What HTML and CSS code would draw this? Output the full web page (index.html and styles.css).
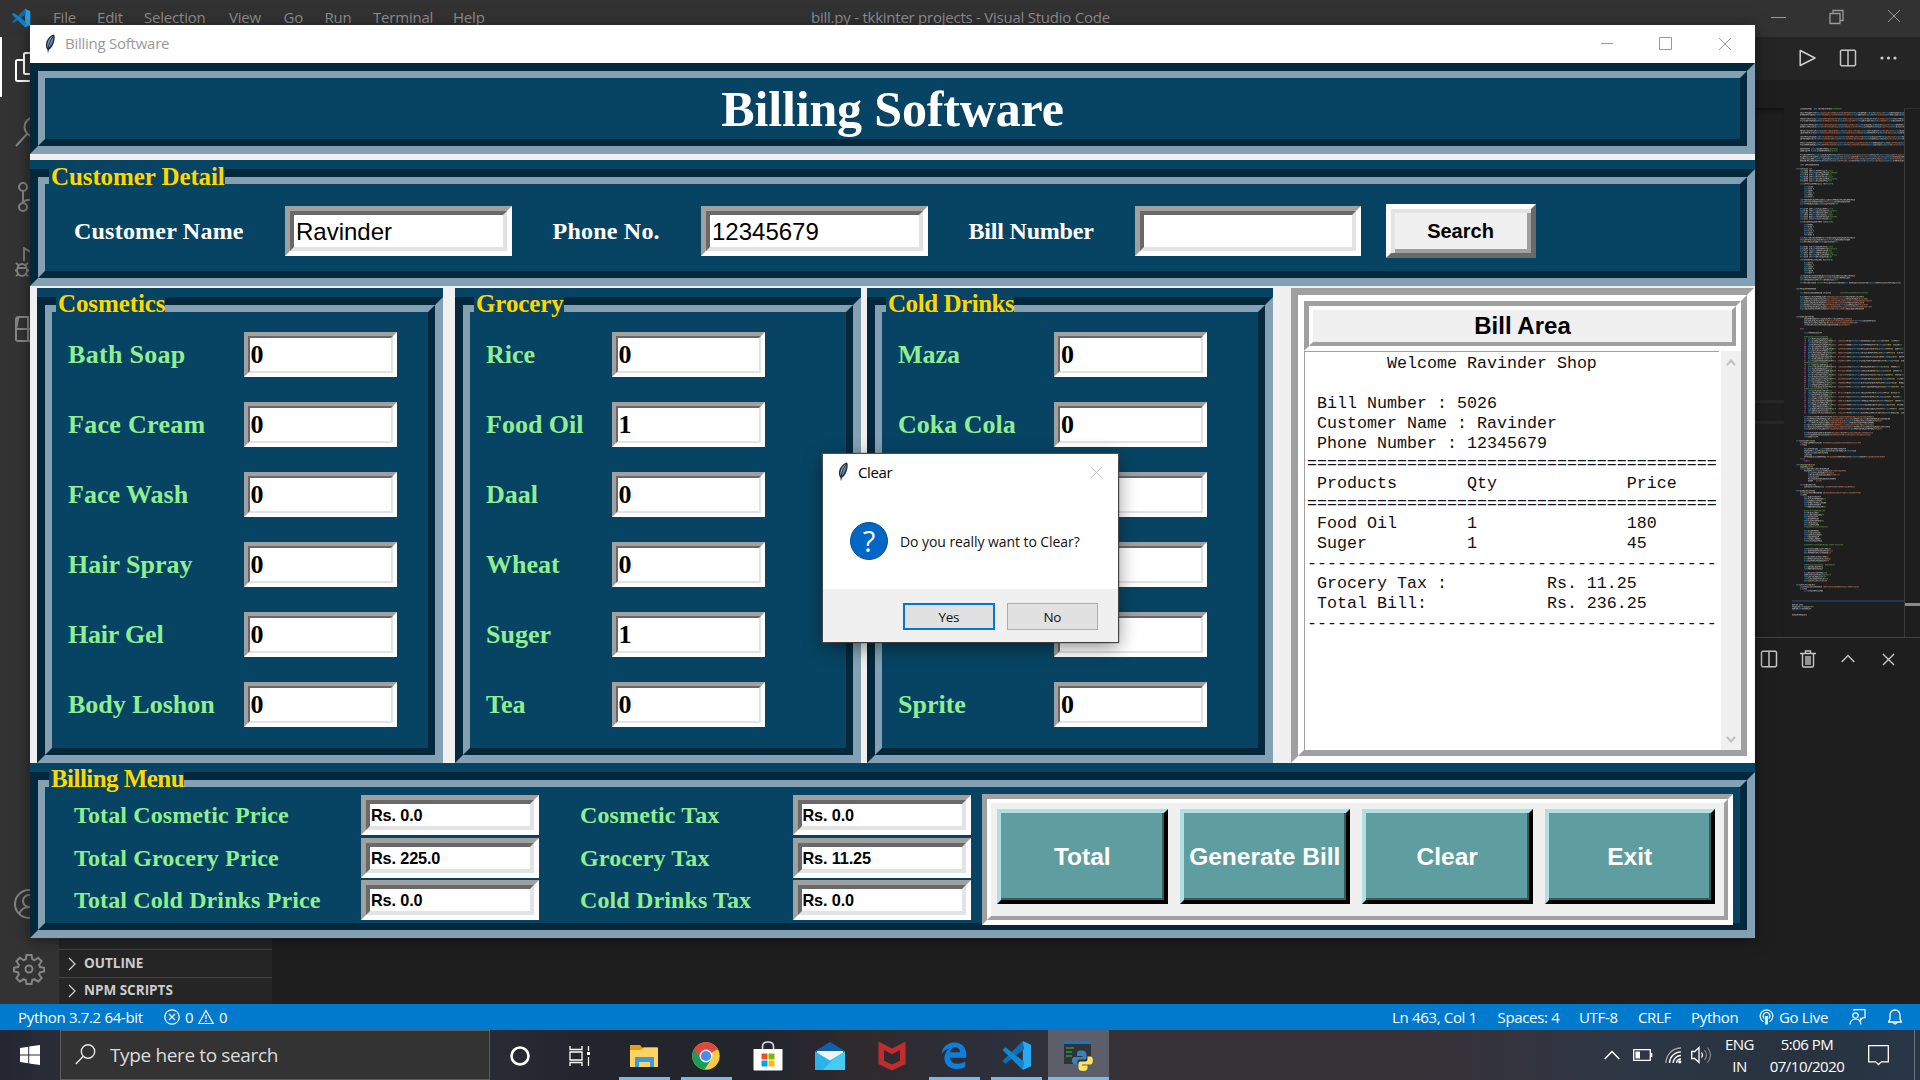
FILE: index.html
```html
<!DOCTYPE html>
<html lang="en">
<head>
<meta charset="utf-8">
<title>Billing Software</title>
<link rel="stylesheet" href="styles.css">
</head>
<body>
<svg class="defs" aria-hidden="true">
  <defs>
    <linearGradient id="penBlue" x1="0" y1="0" x2="1" y2="1"><stop offset="0" stop-color="#9cc4ee"/><stop offset="1" stop-color="#24559c"/></linearGradient>
    <symbol id="feather" viewBox="0 0 12 20">
      <path d="M9.8 .6C6 1.600 2.600 5.500 2 10c-.3 2.500.2 4.300 1.400 5.600L4 19.400l.9-3.600C8 14 10 9.500 10.600 5c.3-2 .1-3.600-.8-4.400z" fill="#1d2a3c"/>
      <path d="M9 2C6 3.300 3.800 6.800 3.300 10.200c-.2 1.600 0 2.700.5 3.600C4.600 9.500 6.300 5.500 9 2z" fill="#8f9aa8"/>
      <path d="M9.500 2.600C7 6 5.300 10 4.700 14 7.200 12 9.600 7.500 9.500 2.600z" fill="url(#penBlue)"/>
    </symbol>
    <symbol id="vscode" viewBox="0 0 32 32">
      <path d="M22.500 1 31 5v22l-8.500 4z" fill="#29a9f2"/>
      <path d="M22.500 1 24 9.500 4.500 24.500 1.500 21.800z" fill="#0c6fb8"/>
      <path d="M22.500 31 24 22.500 4.500 7.500 1.500 10.200z" fill="#1089d4"/>
    </symbol>
    <symbol id="split" viewBox="0 0 18 18"><path d="M2.500 1.200h13l1 1v13.600l-1 1h-13l-1-1V2.200zM9 1.200v15.600" fill="none" stroke="#c5c5c5" stroke-width="1.500"/></symbol>
    <symbol id="cross" viewBox="0 0 14 14"><path d="M1 1l12 12M13 1L1 13" fill="none" stroke="currentColor"/></symbol>
  </defs>
</svg>

<div class="desktop">
  <div class="vscode">
    <header class="vs-title">
      <svg class="vs-logo" width="20" height="20"><use href="#vscode"/></svg>
      <nav class="vs-menu"><span>File</span><span>Edit</span><span>Selection</span><span>View</span><span>Go</span><span>Run</span><span>Terminal</span><span>Help</span></nav>
      <div class="vs-name"><span>bill.py - tkkinter projects - Visual Studio Code</span></div>
      <div class="vs-controls">
        <svg width="16" height="16"><path d="M0 8.500h15" stroke="#9a9a9a"/></svg>
        <svg width="16" height="16"><path d="M1 4.500h10v10H1zM4 4.500v-3h10v10h-3" fill="none" stroke="#9a9a9a" stroke-width="1.300"/></svg>
        <svg class="x" width="14" height="14"><use href="#cross"/></svg>
      </div>
    </header>
    <div class="vs-body">
      <aside class="activity">
        <div class="act active"><svg width="30" height="30" viewBox="0 0 30 30"><path d="M9 8H2.500Q1 8 1 9.500v18Q1 29 2.500 29H17M9 2.500Q9 1 10.500 1H22l6 6v13q0 2-2 2H10.500Q9 22 9 20.500z" fill="none" stroke="#fff" stroke-width="2"/></svg></div>
        <div class="act"><svg width="30" height="30" viewBox="0 0 30 30"><path d="M1 29l11-12" fill="none" stroke="#858585" stroke-width="2"/><circle cx="19" cy="10" r="9.500" fill="none" stroke="#858585" stroke-width="2"/></svg></div>
        <div class="act"><svg width="30" height="30" viewBox="0 0 30 30"><g fill="none" stroke="#858585" stroke-width="2"><circle cx="8" cy="5" r="4"/><circle cx="8" cy="25" r="4"/><circle cx="24" cy="9" r="4"/><path d="M8 9v12M24 13q0 5-6 5h-5q-4 0-5 3"/></g></svg></div>
        <div class="act"><svg width="30" height="30" viewBox="0 0 30 30"><g fill="none" stroke="#858585" stroke-width="1.800"><path d="M9 14V1l19 12-12 8"/><ellipse cx="7" cy="23" rx="5" ry="6"/><path d="M2 21h10M0 23.500h2M12 23.500h2M1 16l3 2.500M13 16l-3 2.500M1 29l3-2M13 29l-3-2"/></g></svg></div>
        <div class="act"><svg width="30" height="30" viewBox="0 0 30 30"><path d="M3.500 5H13v24M1 17h25v10.500q0 1.500-1.500 1.500h-21Q1 29 1 27.500v-20Q1 5 3.500 5zM17 1h11v11H17z" fill="none" stroke="#858585" stroke-width="2"/></svg></div>
        <div class="act account"><svg width="30" height="30" viewBox="0 0 30 30"><g fill="none" stroke="#858585" stroke-width="2"><circle cx="15" cy="15" r="14"/><circle cx="15" cy="12" r="6"/><path d="M5 25q3-7 10-7t10 7"/></g></svg></div>
        <div class="act gear"><svg width="32" height="32" viewBox="0 0 32 32"><g fill="none" stroke="#858585" stroke-width="2"><path d="M13.500 2h5l.8 4.300 2.200.9 3.600-2.500 3.500 3.500-2.500 3.600.9 2.200 4.200.8v3.600l-4.200.9-.9 2.200 2.500 3.600-3.500 3.500-3.600-2.500-2.200.9-.8 4h-5l-.8-4-2.200-.9-3.600 2.500-3.500-3.500 2.500-3.600-.9-2.200-4-.9v-3.600l4-.8.9-2.200-2.500-3.600 3.500-3.500 3.600 2.500 2.200-.9z"/><circle cx="16" cy="16" r="3.500"/></g></svg></div>
      </aside>
      <aside class="sidebar">
        <div class="section"><svg width="8" height="14"><path d="M1 1l6 6-6 6" fill="none" stroke="#ccc" stroke-width="1.300"/></svg><span>OUTLINE</span></div>
        <div class="section npm"><svg width="8" height="14"><path d="M1 1l6 6-6 6" fill="none" stroke="#ccc" stroke-width="1.300"/></svg><span>NPM SCRIPTS</span></div>
      </aside>
      <main class="editor">
        <div class="tabs">
          <svg width="17" height="18" viewBox="0 0 17 18"><path d="M1.200 1.500v15L16 9z" fill="none" stroke="#d0d0d0" stroke-width="1.500" stroke-linejoin="round"/></svg>
          <svg width="18" height="18"><use href="#split"/></svg>
          <svg width="17" height="4"><circle cx="2" cy="2" r="1.600" fill="#ccc"/><circle cx="8.500" cy="2" r="1.600" fill="#ccc"/><circle cx="15" cy="2" r="1.600" fill="#ccc"/></svg>
        </div>
        <div class="crumbs"></div>
        <div class="code">
          <div class="lines"><i></i><i></i></div>
          <canvas id="minimap" width="112" height="529"></canvas>
          <div class="ruler"><i></i></div>
        </div>
        <div class="panel">
          <svg width="18" height="18"><use href="#split"/></svg>
          <svg width="16" height="18" viewBox="0 0 16 18"><path d="M0 3.500h16M5.500 3V1h5v2M2.500 4v11.500q0 1.500 1.500 1.500h8q1.500 0 1.500-1.500V4M6 6v9M8 6v9M10 6v9" fill="none" stroke="#c5c5c5" stroke-width="1.400"/></svg>
          <svg width="14" height="9"><path d="M.7 8L7 1.500 13.300 8" fill="none" stroke="#c5c5c5" stroke-width="1.500"/></svg>
          <svg class="px" width="13" height="13" viewBox="0 0 14 14"><use href="#cross"/></svg>
        </div>
      </main>
    </div>
    <footer class="status">
      <span class="st-py">Python 3.7.2 64-bit</span>
      <svg width="16" height="16"><g fill="none" stroke="#fff" stroke-width="1.200"><circle cx="8" cy="8" r="7.200"/><path d="M5 5l6 6M11 5l-6 6"/></g></svg><span class="st-n">0</span>
      <svg width="16" height="16"><path d="M8 1.500L15.200 14.500H.8zM8 6v4M8 11.200v1.600" fill="none" stroke="#fff" stroke-width="1.200"/></svg><span class="st-n">0</span>
      <div class="st-right">
        <span class="w1">Ln 463, Col 1</span><span class="w2">Spaces: 4</span><span class="w3">UTF-8</span><span class="w4">CRLF</span><span class="w5">Python</span>
        <span class="w6"><svg width="15" height="16" viewBox="0 0 15 16"><g fill="none" stroke="#fff" stroke-width="1.200"><path d="M4.500 12.700A6.300 6.300 0 1 1 10.500 12.700M5.300 9.500A3.400 3.400 0 1 1 9.700 9.500"/></g><path d="M6.200 7h2.600v8.500H6.200z" fill="#fff"/></svg>Go Live</span>
        <svg class="w7" width="17" height="16" viewBox="0 0 17 16"><g fill="none" stroke="#fff" stroke-width="1.200"><path d="M5 2V.7h11v8h-2l-2.500 2.500V8.700"/><circle cx="6.500" cy="6.500" r="2.700"/><path d="M1 15.500q.5-5.500 5.500-5.500t5.500 5.500"/></g></svg>
        <svg width="14" height="16" viewBox="0 0 14 16"><path d="M.5 13h13l-1.500-3V6.500C12 3 10 1 7 1S2 3 2 6.500V10zM5 13.500q2 3 4 0" fill="none" stroke="#fff" stroke-width="1.300"/></svg>
      </div>
    </footer>
  </div>

  <footer class="taskbar">
    <div class="start"><svg width="20" height="20" viewBox="0 0 20 20"><path d="M0 3l8.200-1.200v7.700H0zM9.200 1.600L20 0v9.500H9.200zM0 10.500h8.200v7.700L0 17zM9.200 10.500H20V20L9.200 18.400z" fill="#fff"/></svg></div>
    <div class="search"><svg width="21" height="21" viewBox="0 0 21 21"><g fill="none" stroke="#e8e8e8" stroke-width="1.400"><circle cx="13" cy="7.500" r="6.700"/><path d="M8.300 12.300L.8 20"/></g></svg><span>Type here to search</span></div>
    <div class="tb cortana"><svg width="22" height="22"><circle cx="11" cy="11" r="8.500" fill="none" stroke="#fff" stroke-width="2.600"/></svg></div>
    <div class="tb taskview"><svg width="22" height="20" viewBox="0 0 22 20"><path d="M1 0v3.500h12V0M1 20v-3.500h12V20M1 6h12v8H1zM19.500 0v5M19.500 11v9" fill="none" stroke="#fff" stroke-width="1.300"/><path d="M18 6h3v3h-3z" fill="#fff"/></svg></div>
    <div class="tb open"><svg width="29" height="24" viewBox="0 0 29 24"><path d="M0 1h10l2 2.500h15V23H0z" fill="#e3a013"/><path d="M0 6h11l3-2.500h14V23H0z" fill="#ffd261"/><path d="M5 13h19v10h-4v-5H9v5H5z" fill="#3c9ae0"/></svg></div>
    <div class="tb open"><svg width="28" height="28" viewBox="0 0 28 28"><circle cx="14" cy="14" r="13.700" fill="#fccb3d"/><path d="M14 14L2.200 7A13.700 13.700 0 0 1 25.800 7z" fill="#dc4a3d"/><path d="M2.200 7a13.700 13.700 0 0 0 10.300 20.600L19.500 17 14 14z" fill="#169e59"/><path d="M14 7.500h11.900A13.700 13.700 0 0 0 2.200 7l5.500 9z" fill="#dc4a3d"/><circle cx="14" cy="14" r="6.500" fill="#f2f2f2"/><circle cx="14" cy="14" r="5.100" fill="#4a8af4"/></svg></div>
    <div class="tb"><svg width="30" height="30" viewBox="0 0 30 30"><path d="M9.500 8V5.500q0-4.500 5.500-4.500t5.500 4.500V8" fill="none" stroke="#ddd" stroke-width="1.600"/><path d="M.5 8h29v20.500q0 1-1 1h-27q-1 0-1-1z" fill="#fff"/><path d="M8.500 12.500h6v6h-6z" fill="#f25022"/><path d="M15.500 12.500h6v6h-6z" fill="#7fba00"/><path d="M8.500 19.500h6v6h-6z" fill="#00a4ef"/><path d="M15.500 19.500h6v6h-6z" fill="#ffb900"/></svg></div>
    <div class="tb"><svg width="30" height="28" viewBox="0 0 30 28"><path d="M0 9L15 0l15 9v5H0z" fill="#0f5fb0"/><path d="M2 9h26v10H2z" fill="#f4f4f4"/><path d="M0 9.500l15 9 15-9V28H0z" fill="#2bb3ea"/><path d="M30 9.500V28H8l12-12.500z" fill="#43cdf4"/></svg></div>
    <div class="tb"><svg width="28" height="30" viewBox="0 0 28 30"><path d="M.5.500L14 7.500 27.500.500V23L14 29.500.5 23zM6 9v10.800l8 3.800 8-3.800V9l-8 4.300z" fill="#c22c2c" fill-rule="evenodd"/></svg></div>
    <div class="tb open"><svg width="26" height="27" viewBox="0 0 26 27"><path d="M.5 12C1.500 4.500 7 .5 13.500.5 21 .5 25.300 6 25.300 12.500v3.300H9c.3 4 3.600 6 7.600 6 2.900 0 5.400-.8 7.700-2v5.100c-2.600 1.300-5.500 2-8.700 2C8.500 26.900 3.400 22.800 3.400 16.500c0-4.400 2.200-8 6-9.900C5.500 7 2.600 9 .5 12zm8.700-1.700h9.700c0-3.200-1.900-5-4.700-5s-4.600 2-5 5z" fill="#0f7edc"/></svg></div>
    <div class="tb open"><svg width="31" height="31"><use href="#vscode"/></svg></div>
    <div class="tb open current"><svg width="30" height="32" viewBox="0 0 30 32"><path d="M0 2h27v22H0z" fill="#2f3437"/><path d="M0 1h27v3H0z" fill="#0f78d0"/><path d="M2 8h8M2 12h6M2 16h6" stroke="#2f8f4a" stroke-width="1.300"/><path d="M17.500 10.500c-4 0-4.500 1.500-4.500 4V16h5.500v1h-8c-3.500 0-3.500 7 .5 7.500h2.500v-3q0-2 2-2h5q2 0 2-2v-3c0-2.500-1.500-4-5-4z" fill="#3d7fb8"/><path d="M19 31c4 0 4.500-1.500 4.500-4v-1.500H18v-1h8.500c3 0 3.500-7.500 0-8H23.500v3q0 2-2 2h-5q-2 0-2 2v4c0 2.500 1.500 3.500 4.500 3.500z" fill="#ffe160"/></svg></div>
    <div class="tray">
      <svg class="t1" width="16" height="10"><path d="M.7 9L8 1.500 15.300 9" fill="none" stroke="#fff" stroke-width="1.400"/></svg>
      <svg class="t2" width="20" height="12"><path d="M.7 .7h16.600v10.600H.7zM18.700 4v4" fill="none" stroke="#fff" stroke-width="1.300"/><path d="M2.500 2.500h4.500v7H2.500z" fill="#fff"/></svg>
      <svg class="t3" width="17" height="17" viewBox="0 0 17 17"><g fill="none" stroke-width="1.300"><path d="M1 16A15 15 0 0 1 16 1" stroke="#aaa"/><path d="M4.500 16A11.500 11.500 0 0 1 16 4.800M8 16a8 8 0 0 1 8-7.500M11.500 16q.5-4 4.500-4" stroke="#fff"/></g><circle cx="14.800" cy="14.800" r="1.600" fill="#fff"/></svg>
      <svg class="t4" width="21" height="18" viewBox="0 0 21 18"><path d="M.7 5.500h3L8 1.500v15l-4.300-4h-3z" fill="none" stroke="#fff" stroke-width="1.300"/><path d="M10.500 6.500q2 2.500 0 5" fill="none" stroke="#fff" stroke-width="1.200"/><path d="M13.500 4q4 5 0 10M16.500 1.500q6 7.500 0 15" fill="none" stroke="#888" stroke-width="1.200"/></svg>
      <div class="lang"><span>ENG</span><span>IN</span></div>
      <div class="clock"><span>5:06 PM</span><span class="date">07/10/2020</span></div>
      <svg class="t5" width="21" height="21" viewBox="0 0 21 21"><path d="M.7 .7h19.600v16.100h-7L10.500 19.500 7.700 16.800h-7z" fill="none" stroke="#fff" stroke-width="1.300"/></svg>
    </div>
  </footer>

  <div class="app">
    <header class="app-title">
      <svg width="12" height="20"><use href="#feather"/></svg><span>Billing Software</span>
      <svg class="c1" width="12" height="12"><path d="M0 5.500h12" stroke="#999"/></svg>
      <svg class="c2" width="13" height="13"><path d="M.5 .5h12v12H.5z" fill="none" stroke="#999"/></svg>
      <svg class="c3" width="14" height="14"><use href="#cross"/></svg>
    </header>
    <div class="groove banner"><div class="groove-in"><h1>Billing Software</h1></div></div>

    <section class="lframe customer">
      <div class="groove"><div class="groove-in">
        <label class="k1">Customer Name</label><div class="entry big">Ravinder</div>
        <label class="k2">Phone No.</label><div class="entry big">12345679</div>
        <label class="k3">Bill Number</label><div class="entry big"></div>
        <button class="find">Search</button>
      </div></div>
      <h2>Customer Detail</h2>
    </section>

    <div class="middle">
      <section class="lframe goods cosmetics">
        <div class="groove"><div class="groove-in">
          <label class="wide">Bath Soap</label><div class="entry">0</div>
          <label class="wide">Face Cream</label><div class="entry">0</div>
          <label>Face Wash</label><div class="entry">0</div>
          <label>Hair Spray</label><div class="entry">0</div>
          <label class="tight">Hair Gel</label><div class="entry">0</div>
          <label>Body Loshon</label><div class="entry">0</div>
        </div></div>
        <h2>Cosmetics</h2>
      </section>
      <section class="lframe goods grocery">
        <div class="groove"><div class="groove-in">
          <label>Rice</label><div class="entry">0</div>
          <label>Food Oil</label><div class="entry">1</div>
          <label>Daal</label><div class="entry">0</div>
          <label>Wheat</label><div class="entry">0</div>
          <label>Suger</label><div class="entry">1</div>
          <label>Tea</label><div class="entry">0</div>
        </div></div>
        <h2>Grocery</h2>
      </section>
      <section class="lframe goods drinks">
        <div class="groove"><div class="groove-in">
          <label>Maza</label><div class="entry">0</div>
          <label>Coka Cola</label><div class="entry">0</div>
          <label></label><div class="entry"></div>
          <label></label><div class="entry"></div>
          <label>Limca</label><div class="entry">0</div>
          <label>Sprite</label><div class="entry">0</div>
        </div></div>
        <h2>Cold Drinks</h2>
      </section>
      <section class="bill">
        <div class="bill-in">
          <div class="bill-head"><div>Bill Area</div></div>
          <div class="bill-body">
<pre>        Welcome Ravinder Shop

 Bill Number : 5026
 Customer Name : Ravinder
 Phone Number : 12345679
=========================================
 Products       Qty             Price
=========================================
 Food Oil       1               180
 Suger          1               45
-----------------------------------------
 Grocery Tax :          Rs. 11.25
 Total Bill:            Rs. 236.25
-----------------------------------------</pre>
            <div class="scroll">
              <svg width="10" height="7"><path d="M1 6l4-4.500L9 6" fill="none" stroke="#bfbfbf" stroke-width="2"/></svg>
              <svg width="10" height="7"><path d="M1 1l4 4.500L9 1" fill="none" stroke="#bfbfbf" stroke-width="2"/></svg>
            </div>
          </div>
        </div>
      </section>
    </div>

    <section class="lframe menu">
      <div class="groove"><div class="groove-in">
        <div class="totals">
          <label>Total Cosmetic Price</label><div class="entry sum">Rs. 0.0</div><label class="tax">Cosmetic Tax</label><div class="entry sum">Rs. 0.0</div>
          <label>Total Grocery Price</label><div class="entry sum">Rs. 225.0</div><label class="tax">Grocery Tax</label><div class="entry sum">Rs. 11.25</div>
          <label>Total Cold Drinks Price</label><div class="entry sum">Rs. 0.0</div><label class="tax">Cold Drinks Tax</label><div class="entry sum">Rs. 0.0</div>
        </div>
        <div class="actions"><div class="actions-in">
          <button>Total</button><button>Generate Bill</button><button>Clear</button><button>Exit</button>
        </div></div>
      </div></div>
      <h2>Billing Menu</h2>
    </section>
  </div>

  <div class="dialog">
    <header><svg width="12" height="20"><use href="#feather"/></svg><span>Clear</span><svg class="dx" width="13" height="13" viewBox="0 0 14 14"><use href="#cross"/></svg></header>
    <div class="ask"><div class="q">?</div><p>Do you really want to Clear?</p></div>
    <footer><button class="yes">Yes</button><button>No</button></footer>
  </div>
</div>
<script src="minimap.js"></script>
</body>
</html>
```
FILE: styles.css
```css
* { box-sizing: border-box; }
html, body { margin: 0; height: 100%; overflow: hidden; }
body { font-family: "Open Sans", "Noto Sans", sans-serif; }
svg { display: block; flex: none; }
button { font: inherit; padding: 0; margin: 0; border: 0; border-radius: 0; }
.defs { position: absolute; width: 0; height: 0; }
.desktop { position: relative; width: 1920px; height: 1080px; overflow: hidden; background: #1e1e1e; display: grid; grid-template-rows: 1030px 50px; }

/* editor window */
.vscode { display: grid; grid-template-rows: 37px 967px 26px; }
.vs-title { background: #323233; display: flex; color: #8f8f8f; font-size: 15px; line-height: 20px; white-space: nowrap; padding: 7px 19px 0 11px; }
.vs-logo { opacity: .9; margin: 1px 22px 0 0; }
.vs-menu { display: flex; letter-spacing: -.2px; }
.vs-menu span:nth-child(1) { width: 44px; } .vs-menu span:nth-child(2) { width: 47px; }
.vs-menu span:nth-child(3) { width: 85px; } .vs-menu span:nth-child(4) { width: 54.500px; }
.vs-menu span:nth-child(5) { width: 41px; } .vs-menu span:nth-child(6) { width: 48.500px; }
.vs-menu span:nth-child(7) { width: 80px; } .vs-menu span:nth-child(8) { width: 358px; }
.vs-name { letter-spacing: -.24px; flex: 1; }
.vs-controls { display: flex; gap: 42px; padding-top: 2px; color: #9a9a9a; }
.vs-body { display: grid; grid-template-columns: 59px 213px 1fr; }
.activity { background: #333; display: flex; flex-direction: column; gap: 5px; }
.act { height: 60px; display: flex; align-items: center; padding-left: 13px; border-left: 2px solid transparent; }
.act.active { border-color: #fff; }
.account { margin-top: auto; padding-left: 12px; }
.gear { height: 65px; padding: 0 0 5px 11px; }
.sidebar { background: #252526; display: flex; flex-direction: column; justify-content: flex-end; color: #ccc; font-weight: 700; font-size: 13.500px; }
.section { height: 28px; border-top: 1px solid #454547; display: flex; align-items: center; gap: 8px; padding-left: 9px; }
.section span { margin-top: -1px; }
.section.npm { height: 27px; padding-bottom: 1px; }
.editor { display: grid; grid-template-rows: 43px 28px 529px 1fr; }
.tabs { background: #252526; display: flex; justify-content: flex-end; align-items: center; gap: 23px; padding: 0 23px 2px 0; }
.code { display: flex; justify-content: flex-end; }
#minimap { opacity: .9; }
.lines { width: 29px; margin-right: 8px; box-shadow: inset 0 4px 4px -2px #111; padding-top: 292px; }
.lines i { display: block; height: 3px; background: #282828; margin-bottom: 18px; }
.ruler { width: 16px; border-left: 1px solid #3c3c3c; border-top: 1px solid #303030; padding-top: 494px; }
.ruler i { display: block; height: 3px; background: #8a8a8a; }
.panel { border-top: 1px solid #424242; display: flex; justify-content: flex-end; align-items: flex-start; padding: 12px 25px 0 0; color: #c5c5c5; }
.panel svg:nth-child(2) { margin-left: 22px; }
.panel svg:nth-child(3) { margin: 4px 0 0 25px; }
.panel .px { margin: 3px 0 0 27px; stroke-width: 1.500; }
.status { background: #007acc; color: #fff; display: flex; align-items: center; font-size: 15px; letter-spacing: -.33px; white-space: nowrap; padding: 0 18px; }
.st-py { width: 146px; }
.st-n { width: 13px; margin-left: 5px; }
.st-right { display: flex; align-items: center; margin-left: auto; }
.w1 { width: 105.500px; } .w2 { width: 81.500px; } .w3 { width: 59px; } .w4 { width: 53px; } .w5 { width: 68px; }
.w6 { width: 90px; display: flex; align-items: center; gap: 5px; }
.w7 { margin-right: 22px; }

/* taskbar */
.taskbar { display: flex; color: #fff; background: linear-gradient(90deg, #232530 0, #2b2d38 60px, #292c35 490px, #23252e 580px, #23252d 760px, #2f2a2d 860px, #2c303b 1000px, #383338 1150px, #37333a 1450px, #2e3745 1620px, #28333f 1800px, #2a3547 1920px); }
.start { width: 60px; display: grid; place-items: center; }
.search { width: 430px; background: #333; border: 1px solid #5c5c5c; display: flex; align-items: center; gap: 14px; padding: 0 0 1px 14px; font-size: 19px; letter-spacing: -.5px; color: #dcdcdc; white-space: nowrap; }
.search span { margin-top: 1px; letter-spacing: -.36px; }
.tb { width: 62px; height: 50px; display: grid; place-items: center; position: relative; padding-top: 1px; }
.cortana { width: 60px; } .taskview { width: 63px; padding-right: 3px; }
.tb.open::after { content: ""; position: absolute; left: 6px; right: 5px; bottom: 0; height: 3px; background: #76b9ed; }
.tb.current { width: 61px; margin-left: 1px; background: #5c5e69; }
.tb.current::after { left: 0; right: 0; }
.tray { margin-left: auto; display: flex; align-items: center; width: 316px; border-right: 1px solid #68727e; margin-right: 5px; font-size: 15px; letter-spacing: -.5px; line-height: 22px; text-align: center; }
.t1 { margin: 0 13px 0 5px; } .t2 { margin-right: 12px; } .t3 { margin-right: 9px; } .t4 { margin-right: 7px; }
.lang { width: 40px; display: grid; padding-left: 1px; } .clock { width: 95px; display: grid; padding-left: 1px; }
.t5 { margin-left: 14px; }

/* billing window */
.app { position: absolute; left: 30px; top: 25px; width: 1725px; height: 913px; background: #f0f0f0; display: flex; flex-direction: column; box-shadow: 0 2px 14px rgba(0,0,0,.5), 0 0 1px #555; }
.app-title { height: 38px; background: #fff; display: flex; align-items: center; color: #999; font-size: 15px; letter-spacing: -.25px; padding: 0 23px 1px 14px; }
.app-title span { margin: -1px 0 0 9px; }
.c1 { margin-left: auto; margin-right: 46px; } .c2 { margin-right: 46px; }
.groove { border: 8px solid; border-color: #03283b #83a1b2 #83a1b2 #03283b; background: #074463; }
.groove-in { height: 100%; border: 7px solid; border-color: #83a1b2 #03283b #03283b #83a1b2; }
.banner { height: 91px; margin-bottom: 6px; }
h1 { margin: 0; text-align: center; font: bold 50px/62px "Liberation Serif", serif; color: #fff; letter-spacing: -.15px; }
.lframe { position: relative; background: #074463; padding-top: 9px; font-family: "Liberation Serif", serif; }
.lframe > .groove { height: 100%; }
.lframe h2 { position: absolute; left: 19px; top: 3px; margin: 0; padding: 0 0 0 2px; background: #074463; color: #ffd700; font: bold 25px/28px "Liberation Serif", serif; letter-spacing: -.1px; white-space: nowrap; }
.lframe label { color: #90ee90; font-weight: 700; white-space: nowrap; }
.entry { background: linear-gradient(#fff, #fff) padding-box; color: #000; border: 4px solid; border-color: #a0a0a0 #fff #fff #a0a0a0; position: relative; white-space: nowrap; }
.entry::before { content: ""; position: absolute; inset: 0; border: 2px solid; border-color: #696969 #e3e3e3 #e3e3e3 #696969; }

.customer { height: 126px; margin-bottom: 2px; }
.customer .groove-in { display: flex; align-items: center; padding: 6px 0 0 29px; }
.customer label { color: #fff; font-size: 24px; line-height: 50px; letter-spacing: .22px; }
.k1 { width: 211px; } .k2 { width: 148.500px; margin-left: 41px; } .k3 { width: 166px; margin-left: 41px; }
.customer .k3 { letter-spacing: -.2px; }
.entry.big { width: 226.500px; height: 50px; border-width: 5px; font: 24px/41px "Liberation Sans", sans-serif; padding-left: 6px; }
.entry.big::before { border-width: 4px; }
.find { width: 150px; height: 54px; margin-left: 24.500px; border: 5px solid; border-color: #fff #696969 #696969 #fff; background: #f0f0f0; box-shadow: inset 4px 4px #e3e3e3, inset -4px -4px #a0a0a0; font: bold 20px/44px "Liberation Sans", sans-serif; color: #000; }

.middle { display: flex; height: 475px; padding-left: 7px; }
.goods { width: 405.500px; }
.goods h2 { top: 2px; }
.cosmetics { margin-right: 12.500px; } .grocery { margin-right: 6.500px; } .drinks { margin-right: 18.500px; }
.goods .groove-in { display: grid; grid-template-rows: repeat(6, 45px); row-gap: 25px; align-content: start; padding: 20px 0 0 16px; font-size: 26px; }
.goods label { line-height: 45px; }
.goods .wide { letter-spacing: .3px; } .goods .tight { letter-spacing: -.2px; }
.cosmetics .groove-in { grid-template-columns: 175.500px 153px; }
.grocery .groove-in { grid-template-columns: 125.500px 153px; }
.drinks .groove-in { grid-template-columns: 156px 153px; }
.drinks h2 { letter-spacing: -.45px; }
.goods .entry { font-weight: 700; line-height: 37px; padding-left: 3px; }

.bill { width: 463px; border: 7px solid; border-color: #a0a0a0 #fff #fff #a0a0a0; font-family: "Liberation Sans", sans-serif; }
.bill-in { height: 461px; border: 6px solid; border-color: #fff #a0a0a0 #a0a0a0 #fff; display: flex; flex-direction: column; }
.bill-head { height: 50px; border: 5px solid; border-color: #a0a0a0 #fff #fff #a0a0a0; }
.bill-head div { height: 40px; border: 4px solid; border-color: #fff #a0a0a0 #a0a0a0 #fff; background: #f0f0f0; text-align: center; font: bold 24px/31px "Liberation Sans", sans-serif; letter-spacing: 0; }
.bill-body { flex: 1; background: #fff; display: flex; }
.bill pre { margin: 0; width: 415px; border: 1px solid #a0a0a0; border-width: 1px 0 0 1px; padding: 2px 0 0 2px; font: 16.670px/20px "Liberation Mono", monospace; color: #111; }
.scroll { width: 20px; margin-left: auto; background: #f0f0f0; display: flex; flex-direction: column; justify-content: space-between; align-items: center; padding: 8px 0 7px; }

.menu { height: 175px; }
.menu h2 { top: 2px; letter-spacing: -.55px; }
.menu .groove-in { display: flex; padding: 8px 0 0 29px; }
.totals { display: grid; grid-template-columns: 287px 178px 42px 211.500px 178px; grid-auto-rows: 40px; row-gap: 2.500px; font-size: 24px; line-height: 40px; letter-spacing: .12px; align-content: start; }
.totals .tax { grid-column: 4; margin-left: -1px; }
.entry.sum { border-width: 5px; font: bold 16.300px/31px "Liberation Sans", sans-serif; padding-left: 5px; letter-spacing: -.15px; }
.entry.sum::before { border-width: 4px; }
.actions { position: relative; width: 751px; height: 131px; margin: -1px 0 0 11.500px; border: 5px solid; border-color: #a0a0a0 #fff #fff #a0a0a0; flex: none; }
.actions-in { height: 121px; border: 4px solid; border-color: #fff #a0a0a0 #a0a0a0 #fff; background: #f0f0f0; display: flex; gap: 12px; padding: 6px 0 0 6px; }
.actions button { width: 170.500px; height: 95px; border: 4px solid; border-color: #b0e0e3 #000 #000 #b0e0e3; background: #5f9ea0; box-shadow: inset -2px -2px #355c5e; color: #fff; font: bold 24.500px/84px "Liberation Sans", sans-serif; white-space: nowrap; }

/* confirmation dialog */
.dialog { position: absolute; left: 823px; top: 454px; width: 295px; height: 188px; background: #fff; display: flex; flex-direction: column; box-shadow: 0 5px 18px rgba(0,0,0,.45), 0 0 1px 1px #555; }
.dialog header { height: 36px; display: flex; align-items: center; font-size: 15px; letter-spacing: -.4px; padding: 0 15px 0 14px; color: #000; }
.dialog header span { margin-left: 9px; }
.dx { margin-left: auto; color: #bbb; }
.ask { flex: 1; display: flex; align-items: center; padding: 2px 0 0 27px; }
.q { width: 38px; height: 38px; border-radius: 50%; background: #0067c6; border: 1px solid #0a4f93; color: #fff; font-size: 29px; line-height: 35px; text-align: center; }
.ask p { margin: 1px 0 0 12px; font-size: 14px; letter-spacing: -.07px; color: #111; white-space: nowrap; }
.dialog footer { height: 53px; background: #f0f0f0; display: flex; gap: 12px; padding: 14px 0 0 80px; }
.dialog button { width: 91.500px; height: 27px; border: 1px solid #adadad; background: #e1e1e1; font-size: 13.500px; letter-spacing: -.4px; line-height: 24px; color: #111; }
.dialog .yes { border: 2px solid #0078d7; line-height: 22px; }
```
FILE: minimap.js
```js
// Draws the code overview strip: every row is "x offset, y, colour runs".
(function () {
  var ctx = document.getElementById("minimap").getContext("2d");
  var ink = { w: "190,190,190", b: "70,140,190", o: "190,115,85", g: "80,140,60", y: "190,180,110", p: "170,90,160", t: "60,170,140", c: "110,170,200" };
  var seed = 7;
  function rnd() { seed = (seed * 16807) % 2147483647; return seed / 2147483647; }
  function row(x, y, spec, strong) {
    spec.replace(/([a-z_])(\d+)/g, function (m, k, n) {
      for (var i = 0; i < +n; i++, x++) {
        if (k === "_" || x > 111) continue;
        ctx.fillStyle = "rgba(" + ink[k] + "," + ((strong || 0.3) + rnd() * 0.4).toFixed(2) + ")";
        ctx.fillRect(x, y, 1, 1);
        ctx.fillStyle = "rgba(" + ink[k] + "," + (0.12 + rnd() * 0.25).toFixed(2) + ")";
        ctx.fillRect(x, y + 1, 1, 1);
      }
    });
  }
  function rows(x, y, n, step, specs) {
    for (var i = 0; i < n; i++) row(x, y + i * step, specs[i % specs.length]);
  }
  row(8, 0, "w12_2b3_1w14g10");
  for (var k = 0; k < 6; k++) {
    rows(8, 4 + k * 6, 2, 2, ["w16b6o15b" + (5 + k) + "o" + (10 + k * 2) + "b6w8c9o9b6w8c6w6y3"]);
  }
  rows(8, 40, 2, 2, ["w10_1b6w12g9"]);
  rows(8, 46, 4, 2, ["w14b8w10c10b10o18c10b9o16w8", "w18c12b8o14w6b16o9b10w12"]);
  row(8, 56, "b4_1w14");
  [60, 98, 136].forEach(function (y, i) {
    if (!i) row(4, y, "b4y8_1w3");
    rows(8, y + 2, 6, 2, ["b4w4_1w3b4w11g6", "b4w4_1w3b4w13g8", "b4w4_1w3b4w12g4"]);
    row(8, y + 15, "b4w18_1w3t7");
    rows(12, y + 18, 6, 2, ["b4w5", "b4w4_1w1"]);
    rows(8, y + 31, 3, 2, ["b4w20o3w28", "b4y6w12o6b6w16", "b4w14b6w10g4"]);
  });
  row(8, 174, "b4w12_1g7w20b4_1w20b6w26");
  row(4, 180, "b4y8w8");
  row(8, 184, "b4w18_1w8_9g28");
  rows(8, 188, 7, 2, ["b4w22o20w12y6", "b4w22o12b8w12o10", "b4w22o46"]);
  row(4, 208, "b4y6w8");
  rows(12, 210, 4, 2, ["w26b4w10o8", "w20o30b8w14", "w18y6o30", "b4w30o12"]);
  row(8, 220, "p4");
  row(12, 224, "b4w14");
  [[228, 13], [254, 13], [280, 13]].forEach(function (b) {
    row(12, b[0], "g24", 0.4);
    for (var i = 0; i < 12; i++) {
      row(12, b[0] + 2 + i * 2, i % 2 ? "p2_2b4w21o3_2o9w4b10w" + (8 + i) + "y6b5y8_2w6g3" : "p2_2b4w16g4");
    }
  });
  rows(12, 308, 7, 2, ["b4w24o42", "b4w22o24y8b4w24", "b4w20o18b8w20o8", "p2_2b4w18o14b6w24"]);
  rows(12, 324, 3, 2, ["b4w23o10w6o26", "b4w23o40", "b4w10"]);
  row(4, 332, "b4y12w3"); row(8, 334, "b4w18_1o38"); row(8, 336, "p3w4");
  rows(12, 340, 4, 2, ["b4w10_2b6w20", "w8b6y8w20b6w4", "w6b4w14", "w8"]);
  row(12, 348, "w22o12w14b8w5o20"); row(8, 350, "p5"); row(12, 352, "p6");
  row(4, 356, "b4y12w3"); row(8, 358, "w8o5");
  rows(8, 360, 2, 2, ["p3b4w6y4w12", "_4w8b6w12o16"]);
  rows(16, 364, 5, 2, ["b4w12o10", "b2w22o8", "p3w8", "w28", "w5_3o6"]);
  row(8, 376, "p4w12"); row(12, 378, "w20_1o30");
  row(4, 382, "b4y12w3"); row(8, 384, "b4w18_1o38"); row(8, 386, "p3w4");
  rows(12, 388, 6, 2, ["b4w13", "b4w16g2", "b4w14", "b4w18"]);
  row(12, 402, "g21", 0.35);
  rows(12, 404, 7, 2, ["b4w11", "b4w14g2", "b4w10"]);
  row(12, 418, "g24", 0.35);
  rows(12, 422, 6, 2, ["b4w11", "b4w12g1", "b4w14"]);
  row(12, 436, "g24_1g5_1g8", 0.35);
  rows(12, 440, 3, 2, ["b4w20o3", "b4w22o3"]);
  rows(12, 448, 3, 2, ["b4w18o3", "b4w20o3"]);
  row(12, 456, "g19_2g10", 0.35);
  rows(12, 458, 2, 2, ["b4w15"]);
  rows(12, 464, 5, 2, ["b4w15o4", "w18t4g5", "b4w14t4", "b4w16o4"]);
  row(4, 476, "b4y12w3"); row(8, 478, "b4w18_1o36"); row(8, 480, "p3w4"); row(12, 482, "b4w15");
  ctx.fillStyle = "#213a55"; ctx.fillRect(0, 492, 112, 2);
  row(0, 496, "w6_1w4"); row(0, 498, "w8b4w8g2"); row(0, 500, "w6b4w9"); row(0, 506, "w15");
})();
```
